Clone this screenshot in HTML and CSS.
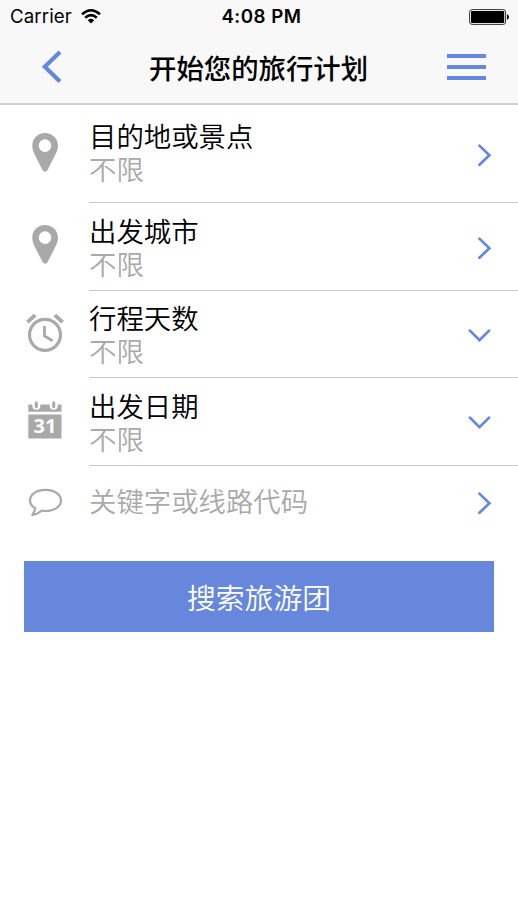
FILE: index.html
```html
<!DOCTYPE html>
<html lang="zh-CN">
<head>
<meta charset="utf-8">
<title>开始您的旅行计划</title>
<link rel="stylesheet" href="styles.css">
</head>
<body>
<header class="header">
  <div class="status">
    <div class="carrier">Carrier
      <svg class="wifi" width="20" height="15" viewBox="0 0 20 15"><g fill="none" stroke="#000" stroke-width="2.5"><path d="M1 5.3Q10-2.7 19 5.3"/><path d="M4.2 8.7Q10 3.5 15.8 8.7"/></g><path d="M6.8 11.2Q10 8.4 13.2 11.2L10 14.4Z"/></svg>
    </div>
    <div class="time">4:08 PM</div>
    <svg class="battery" width="41" height="16" viewBox="0 0 41 16"><rect x=".6" y=".6" width="36" height="14.8" rx="2.5" fill="none" stroke="#333" stroke-width="1"/><rect x="2" y="2" width="33.2" height="12" rx="1"/><path d="M38 5.2Q40 6 40 8T38 10.8Z"/></svg>
  </div>
  <nav class="nav">
    <svg class="back" width="24" height="34" viewBox="0 0 24 34"><path d="M21 2 5.8 16.8 21 31.6" fill="none" stroke="#6487df" stroke-width="4.2"/></svg>
    <h1 class="title">开始您的旅行计划</h1>
    <div class="menu"><span></span><span></span><span></span></div>
  </nav>
</header>
<main>
  <section class="row row-first">
    <svg class="icon" width="40" height="42" viewBox="0 0 40 42"><path fill="#a9a9a9" fill-rule="evenodd" d="M20 2C12.7 2 7.3 7.6 7.3 14.8c0 4.7 2 7.8 10.3 24.3 1.3 2.2 3.8 2.2 5 0C31 22.6 33 19.5 33 14.8 33 7.6 27.3 2 20 2Zm0 6.3a6.3 6.3 0 1 1 0 12.6 6.3 6.3 0 0 1 0-12.6Z"/></svg>
    <div class="body"><div class="texts"><div class="label">目的地或景点</div><div class="value">不限</div></div>
    <svg class="arrow right" width="16" height="24" viewBox="0 0 16 24"><path d="m3.4 2.6 10 9.6-10 9.6"/></svg></div>
  </section>
  <section class="row">
    <svg class="icon" width="40" height="42" viewBox="0 0 40 42"><path fill="#a9a9a9" fill-rule="evenodd" d="M20 2C12.7 2 7.3 7.6 7.3 14.8c0 4.7 2 7.8 10.3 24.3 1.3 2.2 3.8 2.2 5 0C31 22.6 33 19.5 33 14.8 33 7.6 27.3 2 20 2Zm0 6.3a6.3 6.3 0 1 1 0 12.6 6.3 6.3 0 0 1 0-12.6Z"/></svg>
    <div class="body"><div class="texts"><div class="label">出发城市</div><div class="value">不限</div></div>
    <svg class="arrow right" width="16" height="24" viewBox="0 0 16 24"><path d="m3.4 2.6 10 9.6-10 9.6"/></svg></div>
  </section>
  <section class="row">
    <svg class="icon" width="40" height="42" viewBox="0 0 40 42"><g fill="none" stroke="#a9a9a9"><circle cx="20" cy="23.8" r="15.5" stroke-width="3.2"/><path d="M19.5 15v10l8 4.7" stroke-width="2.8"/><path d="m2.4 11.2 7.8-7M37.6 11.2l-7.8-7" stroke-width="3.8"/></g></svg>
    <div class="body"><div class="texts"><div class="label">行程天数</div><div class="value">不限</div></div>
    <svg class="arrow down" width="24" height="16" viewBox="0 0 24 16"><path d="m2.9 3.6 9.6 9.6 9.6-9.6"/></svg></div>
  </section>
  <section class="row">
    <svg class="icon" width="40" height="42" viewBox="0 0 40 42"><path fill="#a9a9a9" d="M3.3 6.5h4v1.3a4 4 0 0 0 8 0V6.5h9.4v1.3a4 4 0 0 0 8 0V6.5h3.8v7.3H3.3ZM3.3 16.5h33.2v24H3.3Z"/><path d="M11.3 4.7v4M28.7 4.7v4" stroke="#a9a9a9" stroke-width="3" stroke-linecap="round"/><text class="day" x="20" y="35.4" text-anchor="middle">31</text></svg>
    <div class="body"><div class="texts"><div class="label">出发日期</div><div class="value">不限</div></div>
    <svg class="arrow down" width="24" height="16" viewBox="0 0 24 16"><path d="m2.9 3.6 9.6 9.6 9.6-9.6"/></svg></div>
  </section>
  <section class="row row-last">
    <svg class="icon" width="40" height="42" viewBox="0 0 40 42"><path fill="none" stroke="#a9a9a9" stroke-width="2.2" stroke-linejoin="round" d="M10.2 28.3C6.7 26.3 5 23.7 5 20.5 5 14.2 11.7 9.8 20.5 9.8S36 14.2 36 20.5 29.3 31 20.5 31c-1.5 0-2.5-.2-3.7-.5-3 2.8-5.7 4-9.5 4.4 1.7-2 2.5-3.5 2.9-6.6Z"/></svg>
    <div class="body"><div class="texts"><div class="value">关键字或线路代码</div></div>
    <svg class="arrow right" width="16" height="24" viewBox="0 0 16 24"><path d="m3.4 2.6 10 9.6-10 9.6"/></svg></div>
  </section>
  <button class="search" type="button">搜索旅游团</button>
</main>
</body>
</html>
```
FILE: styles.css
```css
* { box-sizing: border-box; }
body {
  margin: 0;
  background: #fff;
  color: #000;
  font-family: Inter, "Noto Sans CJK SC", sans-serif;
}
svg { display: block; flex: none; }
.header {
  height: 105px;
  background: #f8f8f8;
  border-bottom: 2px solid #d0d0d0;
}
.status {
  display: grid;
  grid-template-columns: 1fr auto 1fr;
  align-items: center;
  height: 33px;
  padding: 0 8px 0 10px;
}
.carrier { display: flex; align-items: center; gap: 9px; font-size: 18.7px; letter-spacing: .1px; }
.time { font-size: 18.7px; font-weight: 600; letter-spacing: .5px; margin-left: 3px; }
.battery { justify-self: end; }
.nav {
  display: grid;
  grid-template-columns: 110px 1fr auto;
  align-items: center;
  height: 68px;
  padding: 0 32px 0 39px;
}
.title {
  margin: 0;
  font: 500 27.4px/36px "Noto Sans CJK SC", sans-serif;
}
.menu { display: flex; flex-direction: column; gap: 7px; }
.menu span { width: 39px; height: 4px; background: #6487df; }
.row {
  display: grid;
  grid-template-columns: 89px 1fr;
  height: 87.5px;
}
.row-first { height: 98px; }
.icon { margin: 20px 0 0 25px; }
.row-first .icon { margin-top: 26px; }
.row-last .icon { margin-top: 14px; }
.body {
  display: flex;
  justify-content: space-between;
  align-items: flex-start;
  border-bottom: 1px solid #cacaca;
}
.row-last .body { border-bottom: 0; }
.texts {
  padding: 10.5px 0 0;
  font: 350 27.4px/33px "Noto Sans CJK SC", sans-serif;
}
.row-first .texts { padding-top: 14px; }
.row-last .texts { padding-top: 18px; }
.value { color: #a9a9a9; }
.arrow { fill: none; stroke: #6487df; stroke-width: 2.7; stroke-linecap: round; }
.right { margin: 32.5px 26px 0 0; }
.row-first .right { margin-top: 38px; }
.row-last .right { margin-top: 25.5px; }
.down { margin: 36px 27px 0 0; }
.day { font: 700 20px "Open Sans", sans-serif; fill: #fff; }
.search {
  display: block;
  width: 470px;
  height: 71px;
  margin: 8px 0 0 24px;
  padding: 0;
  border: 0;
  background: #6787dd;
  color: #fff;
  font: 350 28.8px/71px "Noto Sans CJK SC", sans-serif;
}
```
